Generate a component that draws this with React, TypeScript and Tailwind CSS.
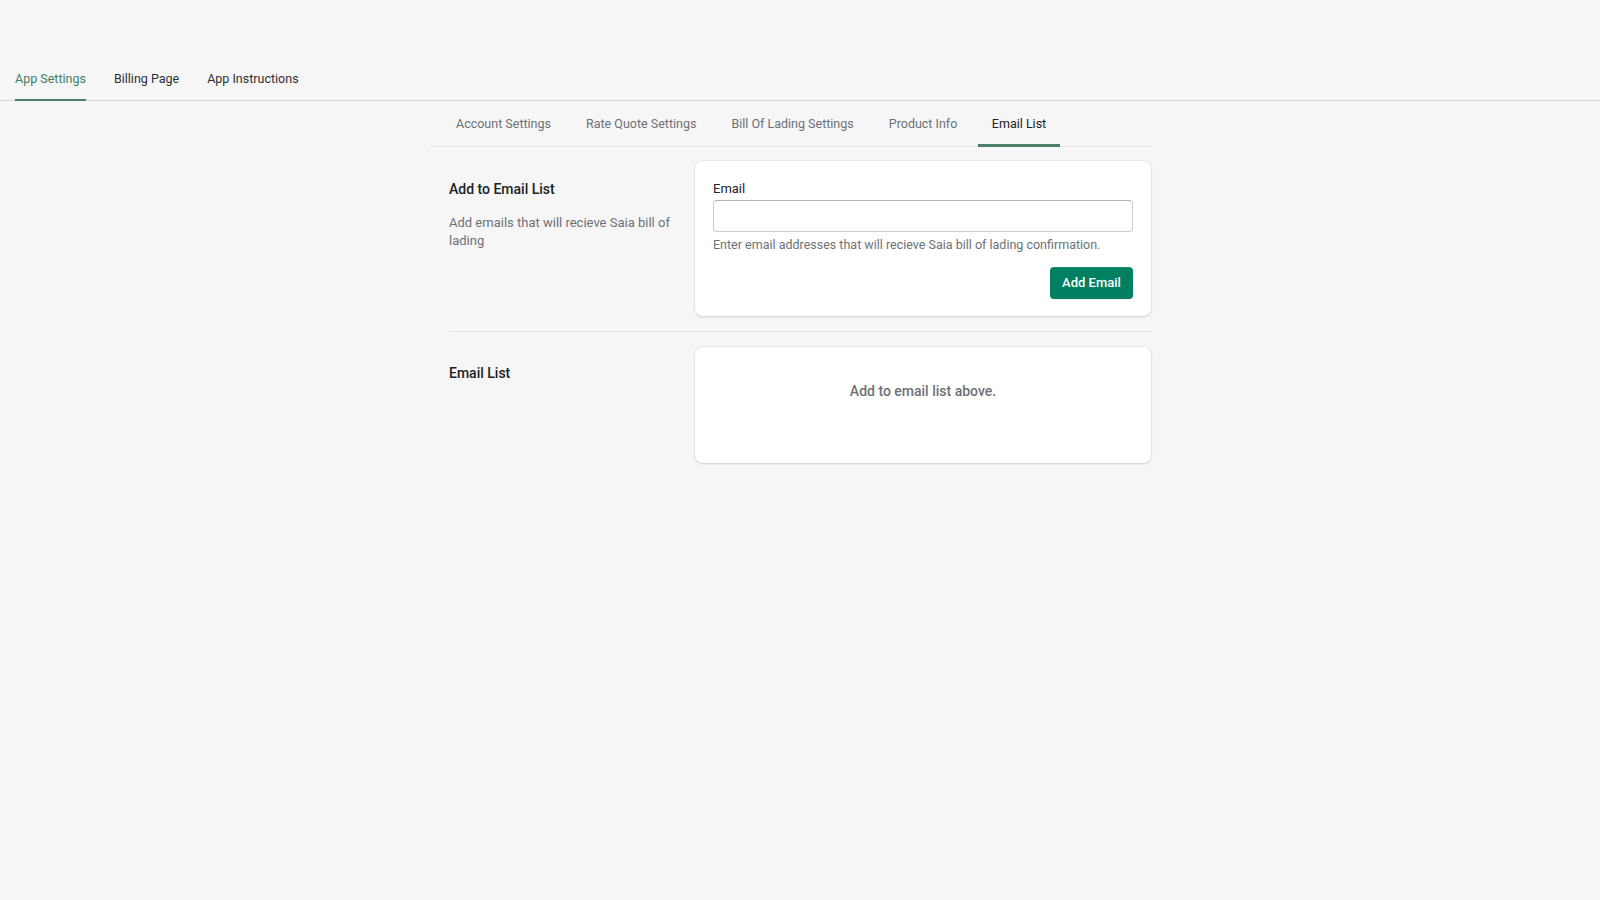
import React from "react";

const topTabs = [
  { label: "App Settings", active: true },
  { label: "Billing Page", active: false },
  { label: "App Instructions", active: false },
];

const subTabs = [
  { label: "Account Settings", active: false },
  { label: "Rate Quote Settings", active: false },
  { label: "Bill Of Lading Settings", active: false },
  { label: "Product Info", active: false },
  { label: "Email List", active: true },
];

export default function App() {
  return (
    <div className="min-h-screen bg-[#f6f6f7] font-['Roboto','Liberation_Sans',sans-serif] text-[#202223]">
      {/* Top navigation */}
      <div className="h-[101px] border-b border-[#d3d5d7] flex items-end px-[15px] gap-[28px]">
        {topTabs.map((t) => (
          <button
            key={t.label}
            className={
              t.active
                ? "h-[32px] -mb-px border-b-2 border-[#4a7f6a] text-[12.5px] leading-[20px] text-[#3f8064] flex items-start"
                : "h-[32px] -mb-px border-b-2 border-transparent text-[12.5px] leading-[20px] text-[#303030] flex items-start"
            }
          >
            {t.label}
          </button>
        ))}
      </div>

      {/* Content */}
      <div className="ml-[430px] w-[722px]">
        {/* Sub tabs */}
        <div className="flex gap-[7px] px-3 border-b border-[#e1e3e5]">
          {subTabs.map((t) => (
            <button
              key={t.label}
              className={
                t.active
                  ? "h-[46px] -mb-px px-[13.5px] pt-[3px] border-b-[3px] border-[#4a7f6a] text-[12.5px] leading-[20px] text-[#202223] flex items-center"
                  : "h-[46px] -mb-px px-[14px] pt-[3px] border-b-[3px] border-transparent text-[12.5px] leading-[20px] text-[#6d7175] flex items-center"
              }
            >
              {t.label}
            </button>
          ))}
        </div>

        {/* Section 1 */}
        <div className="pl-[19px]">
          <div className="flex gap-[20px] pt-[14px] pb-[15px] border-b border-[#e1e3e5]">
            <div className="w-[226px] pt-[18px]">
              <h2 className="text-[14px] leading-[20px] font-medium text-[#202223]">
                Add to Email List
              </h2>
              <p className="mt-[15px] text-[13px] leading-[18px] text-[#6d7175]">
                Add emails that will recieve Saia bill of lading
              </p>
            </div>
            <div className="w-[456px] bg-white rounded-[8px] shadow-[0_0_0_1px_rgba(63,63,68,0.05),0_1px_3px_0_rgba(63,63,68,0.15)] pt-[17px] px-[18px] pb-[17px] flex flex-col">
              <label className="text-[13px] leading-[20px] text-[#202223] pt-px -mb-px">Email</label>
              <input
                type="text"
                className="mt-[2px] h-[32px] w-full rounded-[4px] border border-[#c9cccf] border-t-[#aeb4b9] bg-white px-3 text-[13px] outline-none"
              />
              <p className="mt-[3px] text-[12.5px] leading-[20px] text-[#6d7175]">
                Enter email addresses that will recieve Saia bill of lading confirmation.
              </p>
              <div className="mt-[12px] flex justify-end">
                <button className="h-[32px] w-[83px] rounded-[4px] bg-[#008060] text-white text-[13px] font-medium shadow-[inset_0_1px_0_0_rgba(255,255,255,0.1),0_1px_0_rgba(0,0,0,0.05)]">
                  Add Email
                </button>
              </div>
            </div>
          </div>

          {/* Section 2 */}
          <div className="flex gap-[20px] pt-[15px]">
            <div className="w-[226px] pt-[16px]">
              <h2 className="text-[14px] leading-[20px] font-medium text-[#202223]">Email List</h2>
            </div>
            <div className="w-[456px] h-[116px] bg-white rounded-[8px] shadow-[0_0_0_1px_rgba(63,63,68,0.05),0_1px_3px_0_rgba(63,63,68,0.15)] pt-[34px]">
              <p className="text-center text-[14px] leading-[20px] font-medium text-[#6d7175]">
                Add to email list above.
              </p>
            </div>
          </div>
        </div>
      </div>
    </div>
  );
}
